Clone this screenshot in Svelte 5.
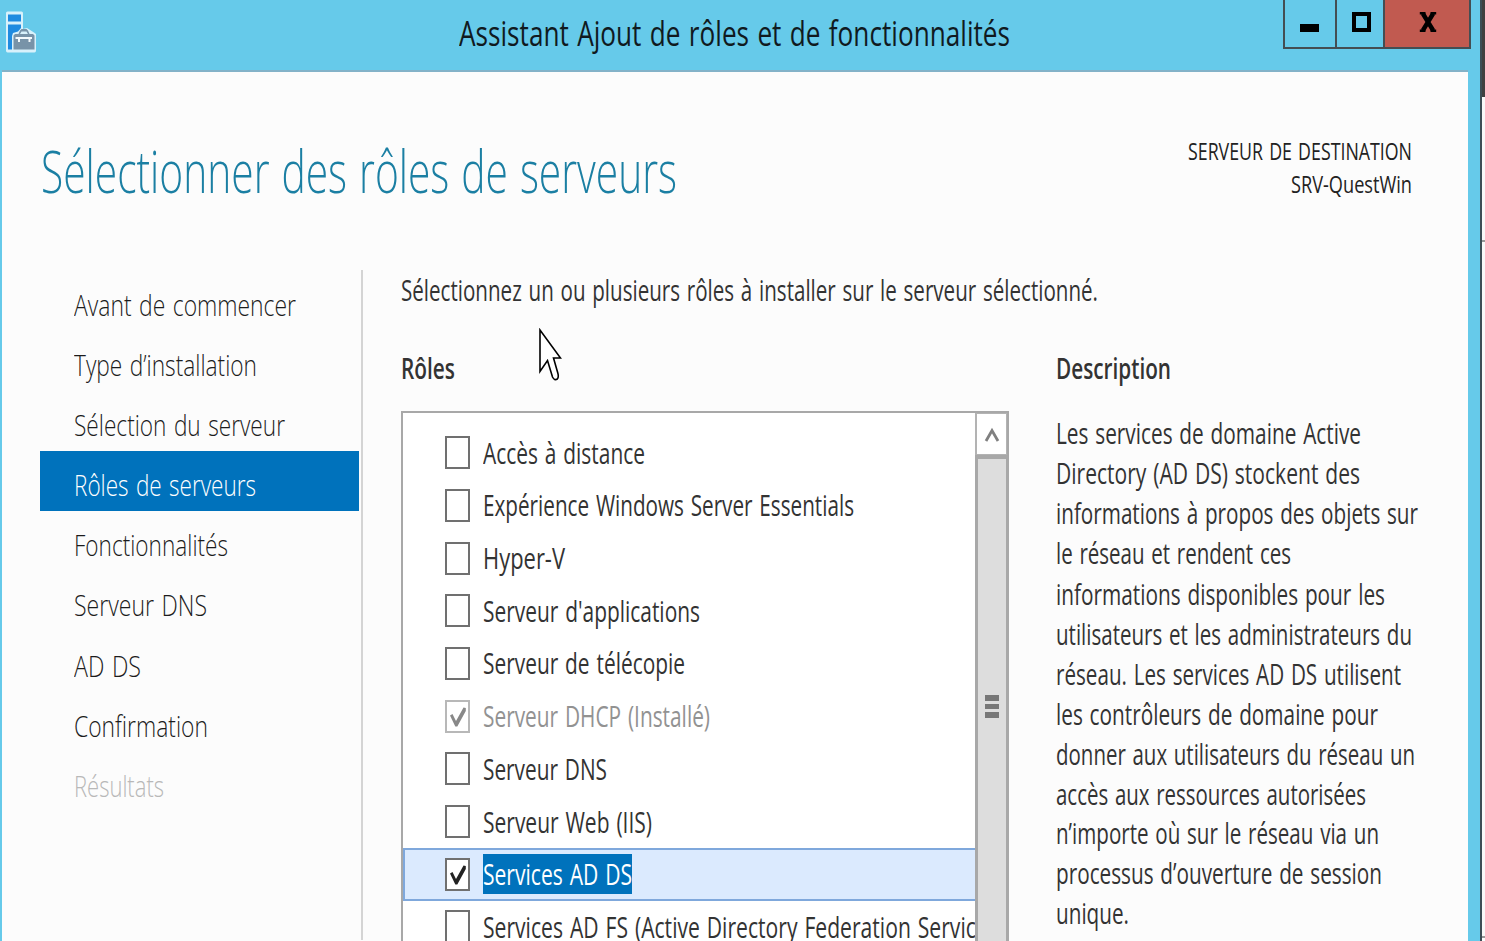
<script>
  const steps = [
    { label: 'Avant de commencer', w: 222 },
    { label: 'Type d’installation', w: 183 },
    { label: 'Sélection du serveur', w: 211 },
    { label: 'Rôles de serveurs', w: 182, active: true },
    { label: 'Fonctionnalités', w: 154 },
    { label: 'Serveur DNS', w: 133 },
    { label: 'AD DS', w: 67 },
    { label: 'Confirmation', w: 134 },
    { label: 'Résultats', w: 90, disabled: true }
  ];

  const roles = [
    { label: 'Accès à distance', w: 162 },
    { label: 'Expérience Windows Server Essentials', w: 371 },
    { label: 'Hyper-V', w: 82 },
    { label: "Serveur d'applications", w: 217 },
    { label: 'Serveur de télécopie', w: 202 },
    { label: 'Serveur DHCP (Installé)', w: 227, checked: true, disabled: true },
    { label: 'Serveur DNS', w: 124 },
    { label: 'Serveur Web (IIS)', w: 169 },
    { label: 'Services AD DS', w: 149, checked: true, selected: true },
    { label: 'Services AD FS (Active Directory Federation Services)', w: 521 }
  ];

  const description = [
    ['Les services de domaine Active', 305],
    ['Directory (AD DS) stockent des', 304],
    ['informations à propos des objets sur', 362],
    ['le réseau et rendent ces', 235],
    ['informations disponibles pour les', 329],
    ['utilisateurs et les administrateurs du', 356],
    ['réseau. Les services AD DS utilisent', 345],
    ['les contrôleurs de domaine pour', 322],
    ['donner aux utilisateurs du réseau un', 359],
    ['accès aux ressources autorisées', 310],
    ['n’importe où sur le réseau via un', 323],
    ['processus d’ouverture de session', 326],
    ['unique.', 73]
  ];

  // Condenses a line of text horizontally to the given width.
  function fit(node, width) {
    const natural = node.getBoundingClientRect().width;
    node.style.transform = `scaleX(${width / natural})`;
  }
</script>

{#snippet line(text, w)}
  <span class="line" style="width: {w}px"><span class="fit" use:fit={w}>{text}</span></span>
{/snippet}

<div class="screen">
  <div class="window">
    <header class="titlebar">
      <svg class="app-icon" width="32" height="44" viewBox="5 10 32 44">
        <path d="M7.500 11.500H21.500Q23 11.500 23 13V29L27 28 34 32.500 36 34V50.500Q36 52.500 34.500 52.500H7.500Q6 52.500 6 50.500V13Q6 11.500 7.500 11.500Z" fill="#d8f1fb" />
        <path d="M8 14.500H21V21.500H8ZM8 24.500H21V28L18 31.500 13 33 12 36V49.500H8Z" fill="#1f8be0" />
        <path d="M13.500 35.500 15 34H18.500L20 30.500 21.500 29H26.500L28 30.500 29.500 34H33L34.500 35.500V49.500H13.500Z" fill="#7893a8" />
        <path d="M20 34 21.500 31.500H26.500L28 34Z" fill="#d8f1fb" />
        <path d="M15.500 38H32M19 38V42M29.500 38V42" stroke="#f4fafd" stroke-width="2" fill="none" />
      </svg>
      <h1>{@render line('Assistant Ajout de rôles et de fonctionnalités', 551)}</h1>
      <div class="controls">
        <button class="min" aria-label="Réduire"><svg width="20" height="32"><rect x="0" y="24" width="19" height="8" fill="#000" /></svg></button>
        <button class="max" aria-label="Agrandir"><svg width="19" height="20"><rect x="2" y="2" width="15" height="16" fill="none" stroke="#000" stroke-width="4" /></svg></button>
        <button class="close" aria-label="Fermer"><svg width="18" height="20" viewBox="0 0 18 20"><path d="M3.800 1.500 14.200 18.500M14.200 1.500 3.800 18.500" stroke="#000" stroke-width="4.400" /><path d="M.8 1.300H6.500M11.500 1.300h5.700M.8 18.700H6.500M11.500 18.700h5.700" stroke="#000" stroke-width="2.400" /></svg></button>
      </div>
    </header>

    <main>
      <div class="heading">
        <h2>{@render line('Sélectionner des rôles de serveurs', 636)}</h2>
        <div class="destination">
          {@render line('SERVEUR DE DESTINATION', 224)}
          {@render line('SRV-QuestWin', 121)}
        </div>
      </div>

      <div class="body">
        <nav>
          {#each steps as s}
            <div class="step" class:active={s.active} class:disabled={s.disabled}>{@render line(s.label, s.w)}</div>
          {/each}
        </nav>

        <section class="roles">
          <p>{@render line('Sélectionnez un ou plusieurs rôles à installer sur le serveur sélectionné.', 697)}</p>
          <h3>{@render line('Rôles', 54)}</h3>
          <div class="listbox">
            <div class="rows">
              {#each roles as r}
                <div class="row" class:selected={r.selected} class:disabled={r.disabled}>
                  <span class="check">
                    {#if r.checked}
                      <svg width="21" height="29" viewBox="0 0 21 29"><path d="M3 13.500 5.500 12 9 19 16.500 5.500 18.800 6 18.800 9 10.300 24.500H8.300Z" fill="currentColor" /></svg>
                    {/if}
                  </span>
                  <span class="label">{@render line(r.label, r.w)}</span>
                </div>
              {/each}
            </div>
            <div class="scrollbar">
              <div class="up"><svg width="16" height="18" viewBox="0 0 16 18"><path d="M2 16 8 5.500 14 16" fill="none" stroke="#808080" stroke-width="2.800" /></svg></div>
              <div class="thumb"><i></i><i></i><i></i></div>
            </div>
          </div>
        </section>

        <aside>
          <h3>{@render line('Description', 115)}</h3>
          <div class="desc">
            {#each description as [text, w]}
              {@render line(text, w)}
            {/each}
          </div>
        </aside>
      </div>
    </main>
  </div>
  <div class="behind">
    <div class="dark"></div>
    <div class="pane"></div>
    <div class="pane rest"></div>
  </div>

  <svg class="cursor" width="24" height="54" viewBox="0 0 24 54">
    <path d="M2 2V43.500L9.500 32.500 14.500 49Q16.500 53 19.300 51 21 49 19.800 45L15.500 30H22.500Z" fill="#fff" stroke="#000" stroke-width="1.600" />
  </svg>
</div>

<style>
  :global(body) { margin: 0; overflow: hidden; }
  .screen {
    position: relative;
    display: flex;
    width: 1485px;
    height: 941px;
    overflow: hidden;
    font-family: 'Open Sans', 'Noto Sans', sans-serif;
    font-size: 29.500px;
    word-spacing: 2px;
    color: #333;
    background: #fcfcfc;
  }
  .line { display: block; white-space: nowrap; }
  .fit { display: inline-block; transform-origin: 0 50%; }
  h1, h2, h3, p { margin: 0; font-weight: 400; }
  .window {
    box-sizing: border-box;
    width: 1482px;
    height: 941px;
    display: flex;
    flex-direction: column;
    padding: 0 12px 0 2px;
    background: #66caea;
    border-right: 2px solid #3c4d55;
  }
  .titlebar {
    flex: none;
    display: flex;
    justify-content: space-between;
    height: 70px;
    margin-right: -3px;
  }
  .app-icon { flex: none; margin: 10px 0 0 3px; }
  h1 { margin-left: 422px; font-size: 34px; line-height: 67px; color: #101a1f; margin-right: auto; }
  .controls { display: flex; height: 49px; box-sizing: border-box; border: 2px solid #444e53; border-top: 0; }
  button { display: flex; justify-content: center; box-sizing: border-box; border: 0; padding: 0; background: none; height: 47px; }
  button svg { flex: none; }
  .min { width: 52px; border-right: 2px solid #444e53; }
  .max { width: 48px; border-right: 2px solid #444e53; padding-left: 2px; }
  .max svg { margin-top: 12px; }
  .close { width: 84px; padding-left: 2px; background: #c15a50; }
  .close svg { margin-top: 12px; }
  main { flex: 1; min-height: 0; background: #fcfcfc; border-top: 2px solid #83b2c8; }
  .heading { display: flex; justify-content: space-between; height: 198px; padding: 0 56px 0 39px; }
  h2 { margin-top: 59px; font-size: 58px; font-weight: 300; line-height: 80px; color: #1b7fa3; }
  .destination { display: flex; flex-direction: column; align-items: flex-end; margin-top: 63px; font-size: 23px; line-height: 33px; color: #222; }
  .body { display: flex; }
  nav { width: 361px; height: 670px; box-sizing: border-box; border-right: 2px solid #d4d4d4; }
  .step { margin-left: 38px; width: 319px; height: 60.200px; padding-left: 34px; box-sizing: border-box; line-height: 67px; font-weight: 300; color: #1c1c1c; font-size: 30px; }
  .step:first-child { margin-top: .5px; }
  .step.active { background: #0072bc; color: #fff; }
  .step.disabled { color: #b8b8b8; }
  .roles { margin-left: 38px; width: 609px; height: 671px; }
  .roles p { line-height: 40px; white-space: nowrap; }
  h3 { font-size: 29.500px; font-weight: 600; line-height: 40px; }
  .roles h3 { margin-top: 38px; }
  .listbox { box-sizing: border-box; display: flex; margin-top: 23px; width: 608px; height: 540px; border: 2px solid #a8a8a8; border-bottom: 0; background: #fff; overflow: hidden; }
  .rows { width: 572px; height: 540px; padding-top: 13.400px; box-sizing: border-box; overflow: hidden; }
  .row { display: flex; height: 52.700px; box-sizing: border-box; align-items: center; padding-left: 42px; border: solid transparent; border-width: 2px 0; }
  .row.selected { border: 2px solid #7fa8dc; border-right: 0; background: #dbeafe; padding-left: 40px; }
  .check { flex: none; box-sizing: border-box; width: 25px; height: 33px; border: 2px solid #707070; background: #fff; color: #222; }
  .check svg { display: block; }
  .label { margin-left: 13px; line-height: 40px; }
  .selected .label { background: #0072bc; color: #fff; }
  .row.disabled { color: #929292; }
  .disabled .check { border-color: #b8b8b8; color: #888; }
  .scrollbar { flex: none; width: 32px; display: flex; flex-direction: column; }
  .up { display: flex; align-items: center; justify-content: center; height: 42px; box-sizing: border-box; border: 2px solid #b3b3b3; border-width: 1px 1px 1px 2px; background: #fff; }
  .thumb { flex: 1; display: flex; flex-direction: column; align-items: center; gap: 3px; padding-top: 236px; background: #ddd; border: solid #a8a8a8; border-width: 4px 1px 0 3px; }
  .thumb i { width: 14px; height: 5.500px; background: #777; }
  aside { margin-left: 46px; padding-top: 78px; }
  .desc { margin-top: 25px; line-height: 40.150px; }
  .desc :global(.line:nth-child(11)) { margin-top: -2px; }
  .behind { width: 3px; display: flex; flex-direction: column; }
  .dark { height: 97px; background: #404040; }
  .pane { height: 143px; border-bottom: 2px solid #999; background: #f8f8f8; }
  .rest { height: 694px; }
  .cursor { position: absolute; left: 538px; top: 328px; }
</style>
